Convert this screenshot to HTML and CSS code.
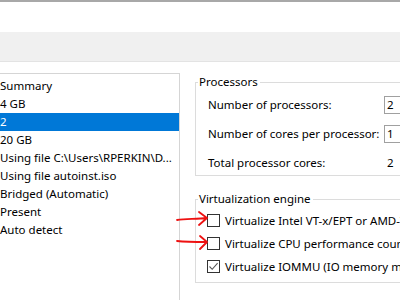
FILE: index.html
```html
<!DOCTYPE html>
<html>
<head>
  <title>Virtual Machine Settings</title>
  <link rel="stylesheet" href="styles.css">
</head>
<body>
  <div class="titlebar"></div>
  <div class="tabs"></div>

  <div class="content">
    <div class="devices">
      <div class="row">Summary</div>
      <div class="row">4 GB</div>
      <div class="row selected">2</div>
      <div class="row">20 GB</div>
      <div class="row">Using file C:\Users\RPERKIN\D...</div>
      <div class="row">Using file autoinst.iso</div>
      <div class="row">Bridged (Automatic)</div>
      <div class="row">Present</div>
      <div class="row">Auto detect</div>
    </div>

    <div class="settings">
      <fieldset class="group processors">
        <legend>Processors</legend>
        <div class="field">
          <span class="label">Number of processors:</span>
          <span class="combo">2</span>
        </div>
        <div class="field">
          <span class="label">Number of cores per processor:</span>
          <span class="combo">1</span>
        </div>
        <div class="field">
          <span class="label">Total processor cores:</span>
          <span class="value">2</span>
        </div>
      </fieldset>

      <fieldset class="group engine">
        <legend>Virtualization engine</legend>
        <label class="check">
          <span class="box"></span>
          Virtualize Intel VT-x/EPT or AMD-V/RVI
          <svg class="arrow" width="34" height="16" viewBox="0 0 34 16"><path d="M1 9 C10 8 20 8 31 7 M23 1 L31 7 L23 14" fill="none" stroke="#ee1111" stroke-width="1.8" stroke-linecap="round" stroke-linejoin="round"/></svg>
        </label>
        <label class="check">
          <span class="box"></span>
          Virtualize CPU performance counters
          <svg class="arrow" width="34" height="16" viewBox="0 0 34 16"><path d="M1 7 C10 8 20 8 31 8 M24 2 L31 8 L24 15" fill="none" stroke="#ee1111" stroke-width="1.8" stroke-linecap="round" stroke-linejoin="round"/></svg>
        </label>
        <label class="check">
          <span class="box"><svg width="11" height="11" viewBox="0 0 11 11"><path d="M1.5 5.5 L4.2 8.3 L9.6 2.2" fill="none" stroke="#555" stroke-width="1.1"/></svg></span>
          Virtualize IOMMU (IO memory management unit)
        </label>
      </fieldset>
    </div>
  </div>
</body>
</html>
```

FILE: styles.css
```css
body {
  margin: 0;
  width: 400px;
  height: 300px;
  overflow: hidden;
  font-family: 'Noto Sans', sans-serif;
  font-size: 11.5px;
  color: #000;
  background-color: #fff;
}

.titlebar {
  height: 30px;
  border-top: 2px solid #a8a8a8;
  background-color: #fff;
}

.tabs {
  height: 29px;
  background-color: #f0f0f0;
  border-bottom: 1px solid #e3e3e3;
}

.content {
  display: flex;
  padding-top: 11px;
}

.devices {
  width: 182px;
  height: 240px;
  margin-left: -4px;
  flex-shrink: 0;
  border: 1px solid #d5d5d5;
  padding-top: 3px;
}

.row {
  height: 18px;
  line-height: 18px;
  padding-left: 3px;
  white-space: nowrap;
}

.row.selected {
  background-color: #0078d7;
  color: #fff;
}

.settings {
  margin-left: 15px;
  padding-top: 2px;
  flex: 1;
  white-space: nowrap;
}

.group {
  border: 1px solid #dcdcdc;
  margin: 0 -30px 0 0;
  padding: 0;
}

.group legend {
  padding: 0 2px 0 1px;
  margin-left: 2px;
  line-height: 14px;
}

.processors {
  height: 99px;
}

.field {
  display: flex;
  align-items: center;
  height: 29px;
  padding-left: 12px;
}

.field:first-of-type {
  margin-top: 1px;
}

.field .label {
  width: 176px;
  flex-shrink: 0;
}

.combo {
  width: 30px;
  height: 16px;
  line-height: 16px;
  padding-left: 2px;
  flex-shrink: 0;
  border: 1px solid #a0a0a0;
}

.value {
  padding-left: 3px;
}

.engine {
  margin-top: 16px;
  height: 86px;
  padding-top: 3px;
}

.check {
  display: flex;
  align-items: center;
  height: 23px;
  padding-left: 11px;
  position: relative;
}

.box {
  width: 13px;
  height: 13px;
  box-sizing: border-box;
  border: 1px solid #333;
  margin-right: 5px;
  display: flex;
  align-items: center;
  justify-content: center;
}

.arrow {
  position: absolute;
  left: -20px;
  top: 2px;
}
```
